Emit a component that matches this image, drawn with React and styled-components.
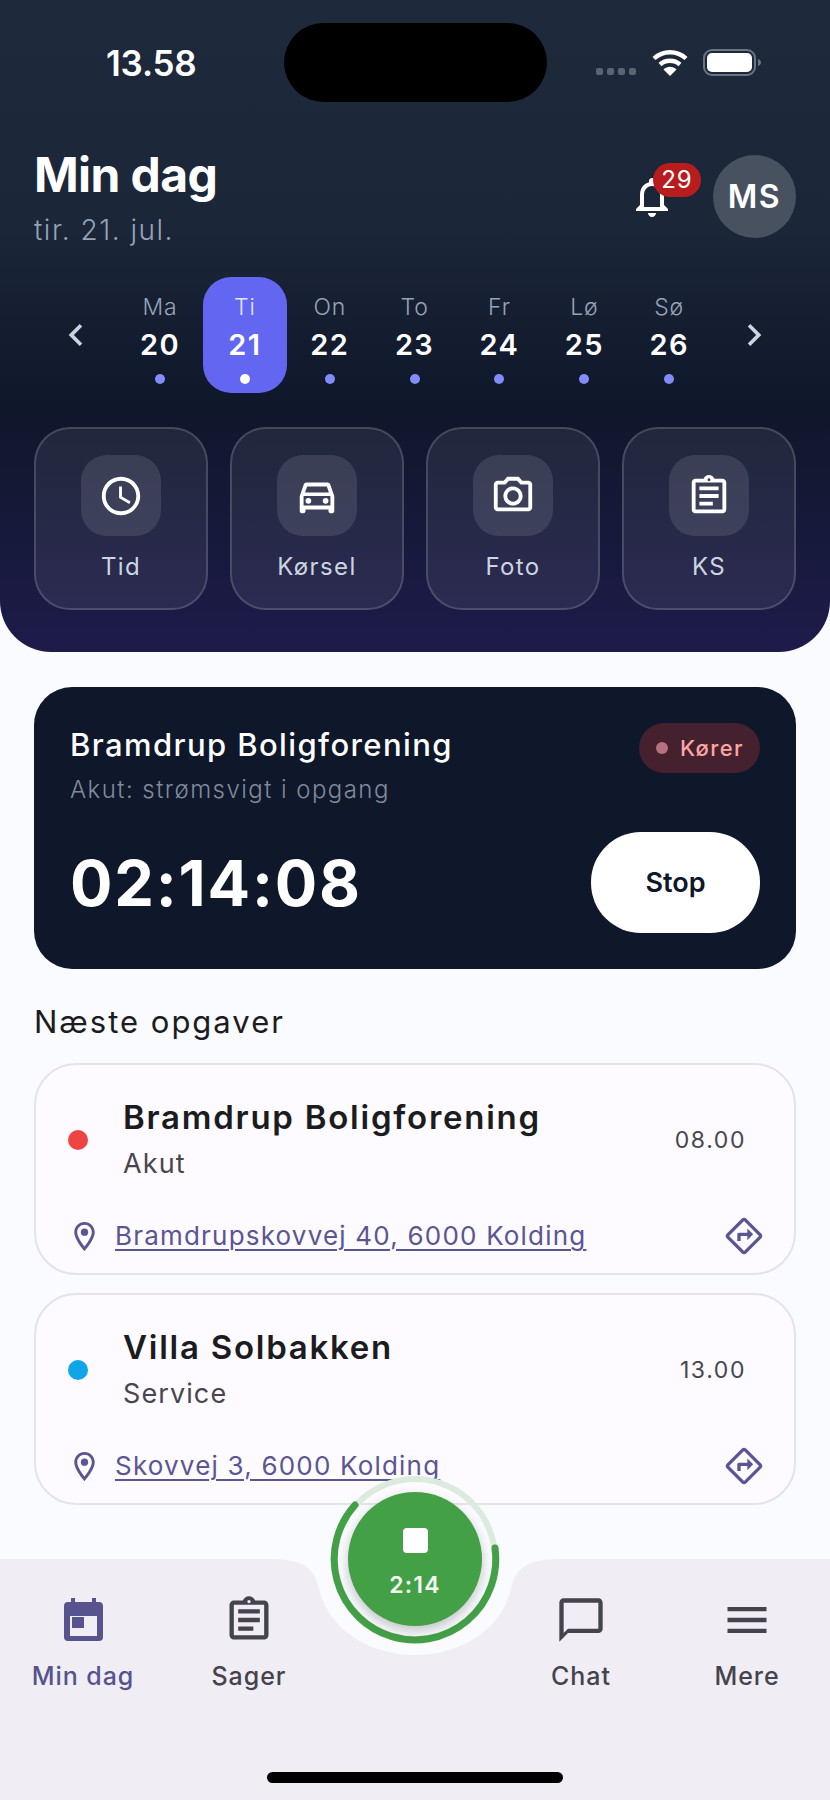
import React from "react";
import styled, { createGlobalStyle } from "styled-components";
import {
  MdChevronLeft,
  MdChevronRight,
  MdOutlineNotifications,
  MdOutlineAccessTime,
  MdOutlineDirectionsCar,
  MdOutlinePhotoCamera,
  MdOutlineAssignment,
  MdOutlineLocationOn,
  MdOutlineDirections,
  MdChatBubbleOutline,
  MdMenu,
} from "react-icons/md";

const GlobalStyle = createGlobalStyle`
  html, body {
    margin: 0;
    padding: 0;
    background: #fafbfe;
  }
  * {
    box-sizing: border-box;
  }
`;

const Page = styled.div`
  position: relative;
  display: flex;
  flex-direction: column;
  width: 830px;
  height: 1800px;
  overflow: hidden;
  background: #fafbfe;
  font-family: Inter, "Liberation Sans", sans-serif;
`;

const Header = styled.header`
  height: 652px;
  padding: 23px 34px 0;
  border-radius: 0 0 51px 51px;
  background: linear-gradient(180deg, #1e293b 0%, #1c2639 35%, #0f172a 62%, #1e1b4b 100%);
`;

const StatusBar = styled.div`
  display: flex;
  align-items: center;
  height: 79px;
`;

const Clock = styled.div`
  width: 250px;
  padding-left: 72px;
  color: #fff;
  font-size: 35px;
  font-weight: 600;
  letter-spacing: -0.2px;
`;

const Island = styled.div`
  width: 263px;
  height: 79px;
  border-radius: 40px;
  background: #000;
`;

const StatusIcons = styled.div`
  display: flex;
  align-items: center;
  margin-left: 49px;
`;

const Signal = styled.div`
  display: flex;
  gap: 4px;
  margin: 18px 16px 0 0;
`;

const SignalDot = styled.span`
  width: 7px;
  height: 7px;
  border-radius: 2px;
  background: #5b6473;
`;

const BatteryWrap = styled.div`
  display: flex;
  margin-left: 15px;
`;

const TitleRow = styled.div`
  display: flex;
  align-items: center;
  justify-content: space-between;
  height: 83px;
  margin-top: 53px;
`;

const Title = styled.h1`
  margin: 0;
  color: #fff;
  font-size: 48px;
  font-weight: 700;
  line-height: 58px;
  letter-spacing: -0.6px;
`;

const Subtitle = styled.div`
  margin-top: 9px;
  color: #94a3b8;
  font-size: 28px;
  font-weight: 300;
  line-height: 34px;
  letter-spacing: 1.5px;
`;

const Actions = styled.div`
  display: flex;
  align-items: center;
  gap: 11px;
`;

const BellWrap = styled.div`
  position: relative;
  display: flex;
  width: 48px;
  height: 48px;
  margin-right: 26px;
  color: #fff;
  font-size: 48px;
`;

const Badge = styled.span`
  position: absolute;
  top: -10px;
  left: 25px;
  width: 48px;
  height: 34px;
  border-radius: 17px;
  background: #b91c1c;
  color: #fff;
  font-size: 24px;
  line-height: 34px;
  letter-spacing: 1px;
  text-align: center;
`;

const Avatar = styled.div`
  display: flex;
  align-items: center;
  justify-content: center;
  width: 83px;
  height: 83px;
  border-radius: 50%;
  background: #475160;
  color: #fff;
  font-size: 32px;
  font-weight: 600;
  letter-spacing: 1.5px;
`;

const DayRow = styled.div`
  display: flex;
  height: 116px;
  margin-top: 39px;
`;

const Chevron = styled.div`
  display: flex;
  align-items: center;
  justify-content: center;
  width: 84px;
  color: #cbd5e1;
  font-size: 44px;
`;

const Days = styled.div`
  display: grid;
  flex: 1;
  grid-template-columns: repeat(7, 1fr);
`;

const Day = styled.div`
  display: flex;
  flex-direction: column;
  align-items: center;
  width: 84px;
  padding-top: 16px;
  border-radius: 28px;
  background: ${(p) => (p.$active ? "#6366f1" : "transparent")};
`;

const DayName = styled.span`
  color: ${(p) => (p.$active ? "#e0e7ff" : "#94a3b8")};
  font-size: 23px;
  font-weight: 300;
  line-height: 28px;
  letter-spacing: 0.8px;
`;

const DayNumber = styled.span`
  margin-top: 6px;
  color: #fff;
  font-size: 29px;
  font-weight: 600;
  line-height: 36px;
  letter-spacing: 1.4px;
`;

const DayDot = styled.span`
  width: 10px;
  height: 10px;
  margin-top: 11px;
  border-radius: 50%;
  background: ${(p) => (p.$active ? "#fff" : "#818cf8")};
`;

const QuickGrid = styled.div`
  display: grid;
  grid-template-columns: repeat(4, 1fr);
  gap: 22px;
  margin-top: 34px;
`;

const QuickCard = styled.div`
  display: flex;
  flex-direction: column;
  align-items: center;
  height: 183px;
  padding-top: 26px;
  border: 2px solid rgba(255, 255, 255, 0.16);
  border-radius: 36px;
  background: rgba(255, 255, 255, 0.07);
`;

const QuickIcon = styled.div`
  display: flex;
  align-items: center;
  justify-content: center;
  width: 80px;
  height: 81px;
  border-radius: 26px;
  background: rgba(255, 255, 255, 0.11);
  color: #fff;
  font-size: 46px;
`;

const QuickLabel = styled.span`
  margin-top: 16px;
  color: #cbd5e1;
  font-size: 24px;
  font-weight: 400;
  line-height: 30px;
  letter-spacing: 1.4px;
`;

const Main = styled.main`
  padding: 35px 34px 0;
`;

const TimerCard = styled.section`
  height: 282px;
  padding: 36px;
  border-radius: 38px;
  background: #0f172a;
`;

const TimerTop = styled.div`
  display: flex;
  align-items: flex-start;
  justify-content: space-between;
`;

const TimerName = styled.div`
  margin-top: 4px;
  color: #fff;
  font-size: 31px;
  font-weight: 500;
  line-height: 36px;
  letter-spacing: 1.4px;
`;

const TimerNote = styled.div`
  margin-top: 12px;
  color: #7f8b9d;
  font-size: 24px;
  font-weight: 300;
  line-height: 30px;
  letter-spacing: 1.45px;
`;

const StatusPill = styled.div`
  display: flex;
  align-items: center;
  gap: 12px;
  height: 50px;
  padding: 0 16px 0 17px;
  border-radius: 25px;
  background: #45202e;
  color: #fca5a5;
  font-size: 22px;
  font-weight: 500;
  letter-spacing: 1.4px;
`;

const PillDot = styled.span`
  width: 12px;
  height: 12px;
  border-radius: 50%;
  background: #b5727e;
`;

const TimerBottom = styled.div`
  display: flex;
  align-items: center;
  justify-content: space-between;
  margin-top: 27px;
`;

const Elapsed = styled.div`
  color: #fff;
  font-size: 63px;
  font-weight: 700;
  letter-spacing: 1.8px;
`;

const StopButton = styled.button`
  width: 169px;
  height: 101px;
  border: none;
  border-radius: 50px;
  background: #fff;
  color: #0f172a;
  font-family: inherit;
  font-size: 27px;
  font-weight: 600;
`;

const SectionTitle = styled.h2`
  margin: 33px 0 21px;
  color: #1c1b1f;
  font-size: 31px;
  font-weight: 400;
  line-height: 40px;
  letter-spacing: 2px;
`;

const JobList = styled.div`
  display: flex;
  flex-direction: column;
  gap: 18px;
`;

const JobCard = styled.article`
  height: 212px;
  padding: 28px 30px 0 32px;
  border: 2px solid #e4e3e8;
  border-radius: 42px;
  background: #fdfbff;
`;

const JobTop = styled.div`
  display: flex;
  align-items: center;
`;

const JobDot = styled.span`
  flex: none;
  width: 20px;
  height: 20px;
  border-radius: 50%;
  background: ${(p) => p.$color};
`;

const JobText = styled.div`
  flex: 1;
  margin-left: 35px;
`;

const JobName = styled.div`
  color: #1c1b1f;
  font-size: 33px;
  font-weight: 600;
  line-height: 48px;
  letter-spacing: 1.75px;
`;

const JobKind = styled.div`
  margin-top: 1px;
  color: #49454f;
  font-size: 27px;
  font-weight: 400;
  line-height: 44px;
  letter-spacing: 1.1px;
`;

const JobTime = styled.div`
  margin-right: 18px;
  color: #49454f;
  font-size: 23px;
  font-weight: 400;
  letter-spacing: 1.6px;
`;

const JobBottom = styled.div`
  display: flex;
  align-items: center;
  height: 42px;
  margin-top: 29px;
`;

const PinIcon = styled.span`
  display: flex;
  margin-left: -1px;
  color: #5b5591;
  font-size: 35px;
`;

const Address = styled.a`
  flex: 1;
  margin-left: 13px;
  color: #5b5591;
  font-size: 26px;
  line-height: 34px;
  letter-spacing: 1.2px;
  text-decoration: underline;
  text-decoration-thickness: 1.5px;
  text-underline-offset: 4px;
`;

const RouteIcon = styled.span`
  display: flex;
  color: #5b5591;
  font-size: 40px;
`;

const BottomNav = styled.nav`
  display: grid;
  grid-template-columns: repeat(5, 1fr);
  position: absolute;
  left: 0;
  right: 0;
  bottom: 0;
  height: 241px;
  background: #f0eef4;
`;

const NavItem = styled.div`
  display: flex;
  flex-direction: column;
  align-items: center;
  padding-top: 35px;
  color: ${(p) => (p.$active ? "#57538f" : "#45434c")};
  font-size: 52px;
`;

const NavLabel = styled.span`
  margin-top: 14px;
  font-size: 25px;
  font-weight: 500;
  line-height: 32px;
  letter-spacing: 0.95px;
`;

const Notch = styled.svg`
  position: absolute;
  top: 0;
  left: 255px;
`;

const RingWrap = styled.svg`
  position: absolute;
  left: 325px;
  top: 1469px;
`;

const Fab = styled.button`
  position: absolute;
  left: 348px;
  top: 1492px;
  display: flex;
  flex-direction: column;
  align-items: center;
  width: 134px;
  height: 134px;
  padding: 36px 0 0;
  border: none;
  border-radius: 50%;
  background: #43a047;
  box-shadow: 0 5px 12px rgba(0, 0, 0, 0.22);
  color: #f1f8f1;
  font-family: inherit;
`;

const FabStop = styled.span`
  width: 25px;
  height: 25px;
  border-radius: 4px;
  background: #fff;
`;

const FabTime = styled.span`
  margin-top: 18px;
  font-size: 23px;
  font-weight: 600;
  line-height: 28px;
  letter-spacing: 1.2px;
`;

const HomeBar = styled.div`
  position: absolute;
  left: 267px;
  bottom: 17px;
  width: 296px;
  height: 11px;
  border-radius: 6px;
  background: #000;
`;

const days = [
  ["Ma", 20],
  ["Ti", 21],
  ["On", 22],
  ["To", 23],
  ["Fr", 24],
  ["Lø", 25],
  ["Sø", 26],
];

const quickActions = [
  ["Tid", MdOutlineAccessTime],
  ["Kørsel", MdOutlineDirectionsCar],
  ["Foto", MdOutlinePhotoCamera],
  ["KS", MdOutlineAssignment],
];

const jobs = [
  {
    name: "Bramdrup Boligforening",
    kind: "Akut",
    time: "08.00",
    address: "Bramdrupskovvej 40, 6000 Kolding",
    color: "#ef4444",
  },
  {
    name: "Villa Solbakken",
    kind: "Service",
    time: "13.00",
    address: "Skovvej 3, 6000 Kolding",
    color: "#0ea5e9",
  },
];

function WifiGlyph() {
  return (
    <svg width="36" height="27" viewBox="0 0 36 27" fill="none" stroke="#fff" strokeWidth="4.4">
      <path d="M2 9.5C11 1.2 25 1.2 34 9.5" />
      <path d="M8 15.5C13.6 10.4 22.4 10.4 28 15.5" />
      <path d="M18 27L11.5 20.4C15.2 17 20.8 17 24.5 20.4Z" fill="#fff" stroke="none" />
    </svg>
  );
}

function BatteryGlyph() {
  return (
    <svg width="58" height="27" viewBox="0 0 58 27" fill="none">
      <rect x="1" y="1" width="51" height="25" rx="8" stroke="#6b7483" strokeWidth="2" />
      <rect x="4" y="4" width="45" height="19" rx="5" fill="#fff" />
      <path d="M55 10c2 .6 3 2 3 3.5s-1 2.9-3 3.5z" fill="#6b7483" />
    </svg>
  );
}

// calendar with a solid header band and a day square in the upper left of its window
function CalendarGlyph() {
  return (
    <svg width="52" height="52" viewBox="0 0 52 52" fill="currentColor">
      <path
        fillRule="evenodd"
        d="M14 4h4v4h17V4h4v4h3a4 4 0 0 1 4 4v31a4 4 0 0 1-4 4H11a4 4 0 0 1-4-4V12a4 4 0 0 1 4-4h3zM13 22v20h27V22z"
      />
      <rect x="15" y="23" width="12" height="11" />
    </svg>
  );
}

function App() {
  return (
    <Page>
      <GlobalStyle />
      <Header>
        <StatusBar>
          <Clock>13.58</Clock>
          <Island />
          <StatusIcons>
            <Signal>
              <SignalDot />
              <SignalDot />
              <SignalDot />
              <SignalDot />
            </Signal>
            <WifiGlyph />
            <BatteryWrap>
              <BatteryGlyph />
            </BatteryWrap>
          </StatusIcons>
        </StatusBar>

        <TitleRow>
          <div>
            <Title>Min dag</Title>
            <Subtitle>tir. 21. jul.</Subtitle>
          </div>
          <Actions>
            <BellWrap>
              <MdOutlineNotifications />
              <Badge>29</Badge>
            </BellWrap>
            <Avatar>MS</Avatar>
          </Actions>
        </TitleRow>

        <DayRow>
          <Chevron>
            <MdChevronLeft />
          </Chevron>
          <Days>
            {days.map(([name, num]) => (
              <Day key={num} $active={num === 21}>
                <DayName $active={num === 21}>{name}</DayName>
                <DayNumber>{num}</DayNumber>
                <DayDot $active={num === 21} />
              </Day>
            ))}
          </Days>
          <Chevron>
            <MdChevronRight />
          </Chevron>
        </DayRow>

        <QuickGrid>
          {quickActions.map(([label, Icon]) => (
            <QuickCard key={label}>
              <QuickIcon>
                <Icon />
              </QuickIcon>
              <QuickLabel>{label}</QuickLabel>
            </QuickCard>
          ))}
        </QuickGrid>
      </Header>

      <Main>
        <TimerCard>
          <TimerTop>
            <div>
              <TimerName>Bramdrup Boligforening</TimerName>
              <TimerNote>Akut: strømsvigt i opgang</TimerNote>
            </div>
            <StatusPill>
              <PillDot />
              Kører
            </StatusPill>
          </TimerTop>
          <TimerBottom>
            <Elapsed>02:14:08</Elapsed>
            <StopButton>Stop</StopButton>
          </TimerBottom>
        </TimerCard>

        <SectionTitle>Næste opgaver</SectionTitle>

        <JobList>
          {jobs.map((job) => (
            <JobCard key={job.name}>
              <JobTop>
                <JobDot $color={job.color} />
                <JobText>
                  <JobName>{job.name}</JobName>
                  <JobKind>{job.kind}</JobKind>
                </JobText>
                <JobTime>{job.time}</JobTime>
              </JobTop>
              <JobBottom>
                <PinIcon>
                  <MdOutlineLocationOn />
                </PinIcon>
                <Address>{job.address}</Address>
                <RouteIcon>
                  <MdOutlineDirections />
                </RouteIcon>
              </JobBottom>
            </JobCard>
          ))}
        </JobList>
      </Main>

      <BottomNav>
        <NavItem $active>
          <CalendarGlyph />
          <NavLabel>Min dag</NavLabel>
        </NavItem>
        <NavItem>
          <MdOutlineAssignment />
          <NavLabel>Sager</NavLabel>
        </NavItem>
        <div />
        <NavItem>
          <MdChatBubbleOutline />
          <NavLabel>Chat</NavLabel>
        </NavItem>
        <NavItem>
          <MdMenu />
          <NavLabel>Mere</NavLabel>
        </NavItem>
        {/* cut-out in the top edge of the bar around the timer button */}
        <Notch width="320" height="100" viewBox="0 0 320 100">
          <path
            d="M0 0H320C290 0 262 -2 256 30C246 72 204 96 160 96C116 96 74 72 64 30C58 -2 30 0 0 0Z"
            fill="#fafbfe"
          />
        </Notch>
      </BottomNav>

      <RingWrap width="180" height="180" viewBox="0 0 180 180" fill="none">
        <circle cx="90" cy="90" r="80" stroke="#dcebdf" strokeWidth="6" />
        <path
          d="M170 79A80.8 80.8 0 1 1 30 36"
          stroke="#43a047"
          strokeWidth="7"
          strokeLinecap="round"
        />
      </RingWrap>
      <Fab>
        <FabStop />
        <FabTime>2:14</FabTime>
      </Fab>

      <HomeBar />
    </Page>
  );
}

export default App;
